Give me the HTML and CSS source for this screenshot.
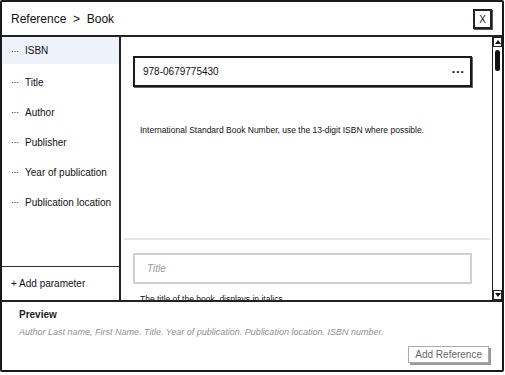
FILE: index.html
```html
<!DOCTYPE html>
<html lang="en">

<head>
    <meta charset="UTF-8">
    <meta name="viewport" content="width=device-width, initial-scale=1.0">
    <title>Reference</title>
    <link rel="stylesheet" href="styles.css">
</head>

<body>
    <div class="window">
        <div class="header">
            <span class="crumb">Reference &nbsp;&gt;&nbsp; Book</span>
            <span class="close">X</span>
        </div>
        <div class="content">
            <div class="sidebar">
                <ul class="params">
                    <li class="active"><span class="dots">&middot;&middot;&middot;</span>ISBN</li>
                    <li><span class="dots">&middot;&middot;&middot;</span>Title</li>
                    <li><span class="dots">&middot;&middot;&middot;</span>Author</li>
                    <li><span class="dots">&middot;&middot;&middot;</span>Publisher</li>
                    <li><span class="dots">&middot;&middot;&middot;</span>Year of publication</li>
                    <li><span class="dots">&middot;&middot;&middot;</span>Publication location</li>
                </ul>
                <div class="add-param">+ Add parameter</div>
            </div>
            <div class="main">
                <div class="fields">
                    <div class="field">
                        <div class="input active">
                            <span>978-0679775430</span>
                            <span class="more">&bull;&bull;&bull;</span>
                        </div>
                        <p class="hint">International Standard Book Number, use the 13-digit ISBN where possible.</p>
                    </div>
                    <div class="field">
                        <div class="input placeholder">Title</div>
                        <p class="hint">The title of the book, displays in italics.</p>
                    </div>
                </div>
                <div class="scrollbar">
                    <span class="arrow up"></span>
                    <span class="track"><span class="thumb"></span></span>
                    <span class="arrow down"></span>
                </div>
            </div>
        </div>
        <div class="footer">
            <div class="preview-label">Preview</div>
            <div class="preview-text">Author Last name, First Name. Title. Year of publication. Publication location. ISBN number.</div>
            <div class="actions">
                <button class="btn">Add Reference</button>
            </div>
        </div>
    </div>
</body>

</html>
```

FILE: styles.css
```css
* {
    padding: 0;
    margin: 0;
    box-sizing: border-box;
}

li {
    list-style: none;
}

body {
    background-color: #fff;
    font-family: "Liberation Sans", Arial, sans-serif;
    color: #111;
}

.window {
    width: 504px;
    height: 372px;
    border: 2px solid #1a1a1a;
    border-radius: 2px;
    display: flex;
    flex-direction: column;
    overflow: hidden;
}

.header {
    height: 35px;
    flex-shrink: 0;
    border-bottom: 2px solid #222;
    display: flex;
    align-items: center;
    justify-content: space-between;
    padding: 0 10px 0 9px;
}

.crumb {
    font-size: 12px;
}

.close {
    width: 19px;
    height: 20px;
    border: 2px solid #222;
    box-shadow: 1px 1px 0 #555;
    font-size: 10px;
    display: flex;
    align-items: center;
    justify-content: center;
    margin-top: 1px;
}

.content {
    height: 265px;
    flex-shrink: 0;
    display: flex;
    border-bottom: 2px solid #222;
}

.sidebar {
    width: 119px;
    flex-shrink: 0;
    border-right: 2px solid #222;
    display: flex;
    flex-direction: column;
}

.params {
    flex: 1;
}

.params li {
    height: 30px;
    display: flex;
    align-items: center;
    padding-left: 9px;
    font-size: 10px;
}

.params li.active {
    background-color: #eef2fa;
    height: 27px;
    margin-bottom: 3px;
}

.dots {
    font-size: 9px;
    width: 14px;
    letter-spacing: -0.5px;
}

.add-param {
    height: 34px;
    border-top: 1px solid #333;
    display: flex;
    align-items: center;
    padding-left: 9px;
    font-size: 10px;
}

.main {
    flex: 1;
    display: flex;
    overflow: hidden;
}

.fields {
    flex: 1;
    overflow: hidden;
    padding: 0 2px 0 3px;
}

.field {
    padding: 19px 18px 0 9px;
    height: 203px;
    border-bottom: 2px solid #e6e6e6;
}

.field + .field {
    border-bottom: 0;
    padding-top: 13px;
}

.input {
    height: 31px;
    display: flex;
    align-items: center;
    justify-content: space-between;
    padding: 0 5px 0 8px;
    font-size: 10px;
}

.input.active {
    border: 2px solid #1a1a1a;
    box-shadow: 1px 1px 0 #666;
}

.input.placeholder {
    border: 2px solid #d0d0d0;
    color: #999;
    font-style: italic;
    padding-left: 12px;
}

.more {
    font-size: 8px;
    letter-spacing: 1.5px;
}

.hint {
    font-size: 8.5px;
    margin: 38px 0 0 7px;
}

.field + .field .hint {
    margin-top: 10px;
}

.scrollbar {
    width: 10px;
    flex-shrink: 0;
    border-left: 1px solid #222;
    display: flex;
    flex-direction: column;
}

.arrow {
    height: 10px;
    border: 1px solid #222;
    display: flex;
    align-items: center;
    justify-content: center;
}

.arrow::before {
    content: "";
    border-left: 3px solid transparent;
    border-right: 3px solid transparent;
}

.arrow.up::before {
    border-bottom: 4px solid #111;
}

.arrow.down::before {
    border-top: 4px solid #111;
}

.track {
    flex: 1;
    padding: 3px 2px;
}

.thumb {
    display: block;
    height: 21px;
    background-color: #111;
    border-radius: 3px;
}

.footer {
    flex: 1;
    padding: 7px 13px 0 17px;
    display: flex;
    flex-direction: column;
}

.preview-label {
    font-size: 10px;
    font-weight: bold;
    color: #222;
}

.preview-text {
    font-size: 9px;
    font-style: italic;
    color: #8f8f8f;
    margin-top: 7px;
}

.actions {
    display: flex;
    justify-content: flex-end;
    margin-top: 9px;
}

.btn {
    font-family: "Liberation Sans", Arial, sans-serif;
    font-size: 10px;
    color: #666;
    background: #fff;
    border: 1px solid #aaa;
    box-shadow: 2px 2px 0 #999;
    padding: 2px 6px;
    height: 17px;
}
```
